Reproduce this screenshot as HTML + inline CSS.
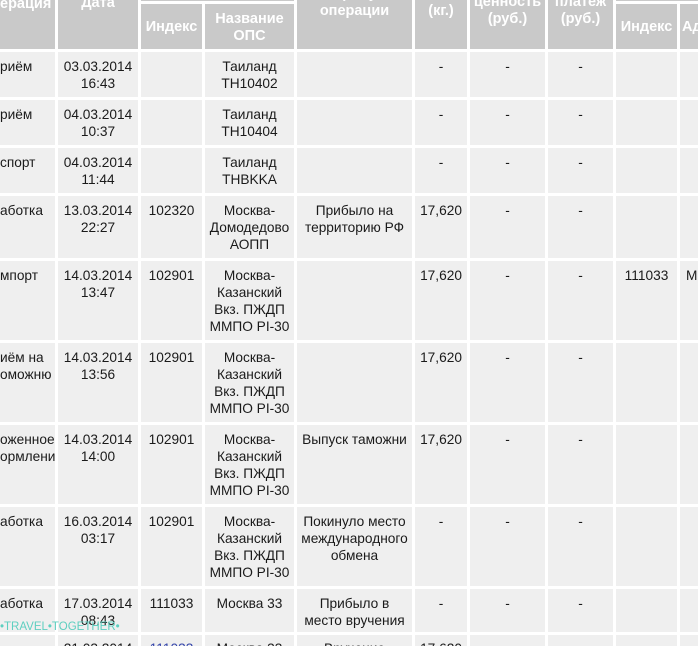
<!DOCTYPE html>
<html><head><meta charset="utf-8"><style>
body{margin:0;width:698px;height:646px;overflow:hidden;background:#fff;position:relative;font-family:"Liberation Sans","DejaVu Sans",sans-serif;}
.c{position:absolute;background:#efefef;color:#1a1a1a;font-size:13.7px;line-height:17px;text-align:center;overflow:hidden;white-space:nowrap;}
.h{position:absolute;background:#c9c9c9;color:#fff;font-weight:bold;font-size:14.5px;line-height:17px;text-align:center;overflow:hidden;white-space:nowrap;}
.t{position:absolute;left:0;right:0;}
.l{text-align:left;}
</style></head><body>
<div class="h" style="left:0;top:0;width:55px;height:49px"><div class="t l" style="top:-4px">ерация</div></div>
<div class="h" style="left:58px;top:0;width:80px;height:49px"><div class="t" style="top:-5px">Дата</div></div>
<div class="h" style="left:141px;top:0;width:153px;height:1px"></div>
<div class="h" style="left:141px;top:4px;width:61px;height:45px"><div class="t" style="top:15px">Индекс</div></div>
<div class="h" style="left:205px;top:4px;width:89px;height:45px"><div class="t" style="top:7px">Название<br>ОПС</div></div>
<div class="h" style="left:297px;top:0;width:115px;height:49px"><div class="t" style="top:-14px">Атрибут<br>операции</div></div>
<div class="h" style="left:415px;top:0;width:52px;height:49px"><div class="t" style="top:-14px">Вес<br>(кг.)</div></div>
<div class="h" style="left:470px;top:0;width:75px;height:49px"><div class="t" style="top:-6px">ценность<br>(руб.)</div></div>
<div class="h" style="left:548px;top:0;width:65px;height:49px"><div class="t" style="top:-6px">платеж<br>(руб.)</div></div>
<div class="h" style="left:616px;top:0;width:82px;height:1px"></div>
<div class="h" style="left:616px;top:4px;width:61px;height:45px"><div class="t" style="top:15px">Индекс</div></div>
<div class="h" style="left:680px;top:4px;width:18px;height:45px"><div class="t l" style="top:15px;left:2px">Адрес</div></div>

<!-- Row 1 -->
<div class="c" style="left:0;top:52px;width:55px;height:45px"><div class="t l" style="top:6px">риём</div></div>
<div class="c" style="left:58px;top:52px;width:80px;height:45px"><div class="t" style="top:6px">03.03.2014<br>16:43</div></div>
<div class="c" style="left:141px;top:52px;width:61px;height:45px"></div>
<div class="c" style="left:205px;top:52px;width:89px;height:45px"><div class="t" style="top:6px">Таиланд<br>TH10402</div></div>
<div class="c" style="left:297px;top:52px;width:115px;height:45px"></div>
<div class="c" style="left:415px;top:52px;width:52px;height:45px"><div class="t" style="top:6px">-</div></div>
<div class="c" style="left:470px;top:52px;width:75px;height:45px"><div class="t" style="top:6px">-</div></div>
<div class="c" style="left:548px;top:52px;width:65px;height:45px"><div class="t" style="top:6px">-</div></div>
<div class="c" style="left:616px;top:52px;width:61px;height:45px"></div>
<div class="c" style="left:680px;top:52px;width:18px;height:45px"></div>
<!-- Row 2 -->
<div class="c" style="left:0;top:100px;width:55px;height:45px"><div class="t l" style="top:6px">риём</div></div>
<div class="c" style="left:58px;top:100px;width:80px;height:45px"><div class="t" style="top:6px">04.03.2014<br>10:37</div></div>
<div class="c" style="left:141px;top:100px;width:61px;height:45px"></div>
<div class="c" style="left:205px;top:100px;width:89px;height:45px"><div class="t" style="top:6px">Таиланд<br>TH10404</div></div>
<div class="c" style="left:297px;top:100px;width:115px;height:45px"></div>
<div class="c" style="left:415px;top:100px;width:52px;height:45px"><div class="t" style="top:6px">-</div></div>
<div class="c" style="left:470px;top:100px;width:75px;height:45px"><div class="t" style="top:6px">-</div></div>
<div class="c" style="left:548px;top:100px;width:65px;height:45px"><div class="t" style="top:6px">-</div></div>
<div class="c" style="left:616px;top:100px;width:61px;height:45px"></div>
<div class="c" style="left:680px;top:100px;width:18px;height:45px"></div>
<!-- Row 3 -->
<div class="c" style="left:0;top:148px;width:55px;height:45px"><div class="t l" style="top:6px">спорт</div></div>
<div class="c" style="left:58px;top:148px;width:80px;height:45px"><div class="t" style="top:6px">04.03.2014<br>11:44</div></div>
<div class="c" style="left:141px;top:148px;width:61px;height:45px"></div>
<div class="c" style="left:205px;top:148px;width:89px;height:45px"><div class="t" style="top:6px">Таиланд<br>THBKKA</div></div>
<div class="c" style="left:297px;top:148px;width:115px;height:45px"></div>
<div class="c" style="left:415px;top:148px;width:52px;height:45px"><div class="t" style="top:6px">-</div></div>
<div class="c" style="left:470px;top:148px;width:75px;height:45px"><div class="t" style="top:6px">-</div></div>
<div class="c" style="left:548px;top:148px;width:65px;height:45px"><div class="t" style="top:6px">-</div></div>
<div class="c" style="left:616px;top:148px;width:61px;height:45px"></div>
<div class="c" style="left:680px;top:148px;width:18px;height:45px"></div>
<!-- Row 4 -->
<div class="c" style="left:0;top:196px;width:55px;height:62px"><div class="t l" style="top:6px">аботка</div></div>
<div class="c" style="left:58px;top:196px;width:80px;height:62px"><div class="t" style="top:6px">13.03.2014<br>22:27</div></div>
<div class="c" style="left:141px;top:196px;width:61px;height:62px"><div class="t" style="top:6px">102320</div></div>
<div class="c" style="left:205px;top:196px;width:89px;height:62px"><div class="t" style="top:6px">Москва-<br>Домодедово<br>АОПП</div></div>
<div class="c" style="left:297px;top:196px;width:115px;height:62px"><div class="t" style="top:6px">Прибыло на<br>территорию РФ</div></div>
<div class="c" style="left:415px;top:196px;width:52px;height:62px"><div class="t" style="top:6px">17,620</div></div>
<div class="c" style="left:470px;top:196px;width:75px;height:62px"><div class="t" style="top:6px">-</div></div>
<div class="c" style="left:548px;top:196px;width:65px;height:62px"><div class="t" style="top:6px">-</div></div>
<div class="c" style="left:616px;top:196px;width:61px;height:62px"></div>
<div class="c" style="left:680px;top:196px;width:18px;height:62px"></div>
<!-- Row 5 -->
<div class="c" style="left:0;top:261px;width:55px;height:79px"><div class="t l" style="top:6px">мпорт</div></div>
<div class="c" style="left:58px;top:261px;width:80px;height:79px"><div class="t" style="top:6px">14.03.2014<br>13:47</div></div>
<div class="c" style="left:141px;top:261px;width:61px;height:79px"><div class="t" style="top:6px">102901</div></div>
<div class="c" style="left:205px;top:261px;width:89px;height:79px"><div class="t" style="top:6px">Москва-<br>Казанский<br>Вкз. ПЖДП<br>ММПО PI-30</div></div>
<div class="c" style="left:297px;top:261px;width:115px;height:79px"></div>
<div class="c" style="left:415px;top:261px;width:52px;height:79px"><div class="t" style="top:6px">17,620</div></div>
<div class="c" style="left:470px;top:261px;width:75px;height:79px"><div class="t" style="top:6px">-</div></div>
<div class="c" style="left:548px;top:261px;width:65px;height:79px"><div class="t" style="top:6px">-</div></div>
<div class="c" style="left:616px;top:261px;width:61px;height:79px"><div class="t" style="top:6px">111033</div></div>
<div class="c" style="left:680px;top:261px;width:18px;height:79px"><div class="t l" style="top:6px;left:6px">Москва</div></div>
<!-- Row 6 -->
<div class="c" style="left:0;top:343px;width:55px;height:79px"><div class="t l" style="top:6px">иём на<br>оможню</div></div>
<div class="c" style="left:58px;top:343px;width:80px;height:79px"><div class="t" style="top:6px">14.03.2014<br>13:56</div></div>
<div class="c" style="left:141px;top:343px;width:61px;height:79px"><div class="t" style="top:6px">102901</div></div>
<div class="c" style="left:205px;top:343px;width:89px;height:79px"><div class="t" style="top:6px">Москва-<br>Казанский<br>Вкз. ПЖДП<br>ММПО PI-30</div></div>
<div class="c" style="left:297px;top:343px;width:115px;height:79px"></div>
<div class="c" style="left:415px;top:343px;width:52px;height:79px"><div class="t" style="top:6px">17,620</div></div>
<div class="c" style="left:470px;top:343px;width:75px;height:79px"><div class="t" style="top:6px">-</div></div>
<div class="c" style="left:548px;top:343px;width:65px;height:79px"><div class="t" style="top:6px">-</div></div>
<div class="c" style="left:616px;top:343px;width:61px;height:79px"></div>
<div class="c" style="left:680px;top:343px;width:18px;height:79px"></div>
<!-- Row 7 -->
<div class="c" style="left:0;top:425px;width:55px;height:79px"><div class="t l" style="top:6px">оженное<br>ормление</div></div>
<div class="c" style="left:58px;top:425px;width:80px;height:79px"><div class="t" style="top:6px">14.03.2014<br>14:00</div></div>
<div class="c" style="left:141px;top:425px;width:61px;height:79px"><div class="t" style="top:6px">102901</div></div>
<div class="c" style="left:205px;top:425px;width:89px;height:79px"><div class="t" style="top:6px">Москва-<br>Казанский<br>Вкз. ПЖДП<br>ММПО PI-30</div></div>
<div class="c" style="left:297px;top:425px;width:115px;height:79px"><div class="t" style="top:6px">Выпуск таможни</div></div>
<div class="c" style="left:415px;top:425px;width:52px;height:79px"><div class="t" style="top:6px">17,620</div></div>
<div class="c" style="left:470px;top:425px;width:75px;height:79px"><div class="t" style="top:6px">-</div></div>
<div class="c" style="left:548px;top:425px;width:65px;height:79px"><div class="t" style="top:6px">-</div></div>
<div class="c" style="left:616px;top:425px;width:61px;height:79px"></div>
<div class="c" style="left:680px;top:425px;width:18px;height:79px"></div>
<!-- Row 8 -->
<div class="c" style="left:0;top:507px;width:55px;height:79px"><div class="t l" style="top:6px">аботка</div></div>
<div class="c" style="left:58px;top:507px;width:80px;height:79px"><div class="t" style="top:6px">16.03.2014<br>03:17</div></div>
<div class="c" style="left:141px;top:507px;width:61px;height:79px"><div class="t" style="top:6px">102901</div></div>
<div class="c" style="left:205px;top:507px;width:89px;height:79px"><div class="t" style="top:6px">Москва-<br>Казанский<br>Вкз. ПЖДП<br>ММПО PI-30</div></div>
<div class="c" style="left:297px;top:507px;width:115px;height:79px"><div class="t" style="top:6px">Покинуло место<br>международного<br>обмена</div></div>
<div class="c" style="left:415px;top:507px;width:52px;height:79px"><div class="t" style="top:6px">-</div></div>
<div class="c" style="left:470px;top:507px;width:75px;height:79px"><div class="t" style="top:6px">-</div></div>
<div class="c" style="left:548px;top:507px;width:65px;height:79px"><div class="t" style="top:6px">-</div></div>
<div class="c" style="left:616px;top:507px;width:61px;height:79px"></div>
<div class="c" style="left:680px;top:507px;width:18px;height:79px"></div>
<!-- Row 9 -->
<div class="c" style="left:0;top:589px;width:55px;height:43px"><div class="t l" style="top:6px">аботка</div></div>
<div class="c" style="left:58px;top:589px;width:80px;height:43px"><div class="t" style="top:6px">17.03.2014<br>08:43</div></div>
<div class="c" style="left:141px;top:589px;width:61px;height:43px"><div class="t" style="top:6px">111033</div></div>
<div class="c" style="left:205px;top:589px;width:89px;height:43px"><div class="t" style="top:6px">Москва 33</div></div>
<div class="c" style="left:297px;top:589px;width:115px;height:43px"><div class="t" style="top:6px">Прибыло в<br>место вручения</div></div>
<div class="c" style="left:415px;top:589px;width:52px;height:43px"><div class="t" style="top:6px">-</div></div>
<div class="c" style="left:470px;top:589px;width:75px;height:43px"><div class="t" style="top:6px">-</div></div>
<div class="c" style="left:548px;top:589px;width:65px;height:43px"><div class="t" style="top:6px">-</div></div>
<div class="c" style="left:616px;top:589px;width:61px;height:43px"></div>
<div class="c" style="left:680px;top:589px;width:18px;height:43px"></div>
<!-- Row 10 -->
<div class="c" style="left:0;top:635px;width:55px;height:11px"></div>
<div class="c" style="left:58px;top:635px;width:80px;height:11px"><div class="t" style="top:5px">21.03.2014</div></div>
<div class="c" style="left:141px;top:635px;width:61px;height:11px"><div class="t" style="top:5px;color:#3344aa">111033</div></div>
<div class="c" style="left:205px;top:635px;width:89px;height:11px"><div class="t" style="top:5px">Москва 33</div></div>
<div class="c" style="left:297px;top:635px;width:115px;height:11px"><div class="t" style="top:5px">Вручение</div></div>
<div class="c" style="left:415px;top:635px;width:52px;height:11px"><div class="t" style="top:5px">17,620</div></div>
<div class="c" style="left:470px;top:635px;width:75px;height:11px"></div>
<div class="c" style="left:548px;top:635px;width:65px;height:11px"></div>
<div class="c" style="left:616px;top:635px;width:61px;height:11px"></div>
<div class="c" style="left:680px;top:635px;width:18px;height:11px"></div>
<div style="position:absolute;left:0;top:621px;font-size:11.5px;color:#5ecfc0;z-index:5;white-space:nowrap">•TRAVEL•TOGETHER•</div>
</body></html>
